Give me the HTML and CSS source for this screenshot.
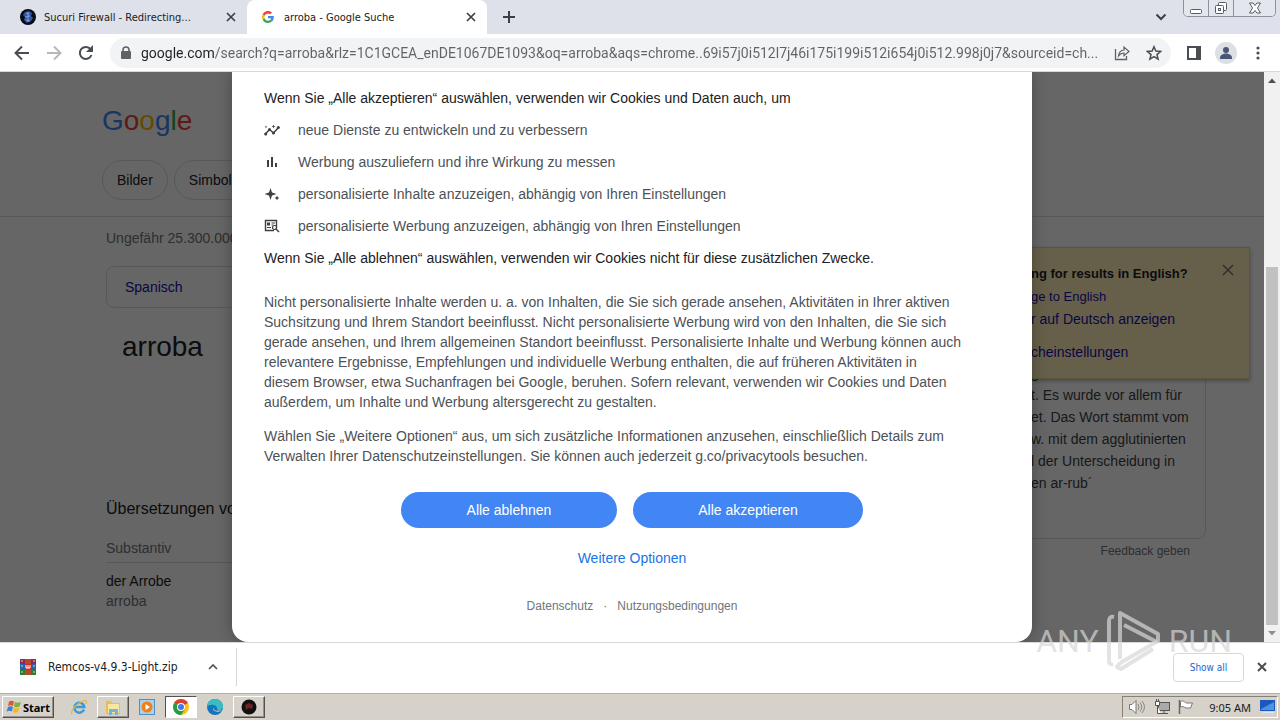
FILE: index.html
```
<!DOCTYPE html>
<html lang="de">
<head>
    <meta charset="UTF-8">
    <meta name="viewport" content="width=device-width, initial-scale=1.0">
    <title>arroba - Google Suche</title>
    <link rel="stylesheet" href="styles.css">
</head>
<body>
    <!-- Tab strip -->
    <div class="tabs">
        <div class="tab">
            <svg class="tab-icon" viewBox="0 0 16 16"><circle cx="8" cy="8" r="8" fill="#080b18"/><path d="M5 3l4-1 3 2-1 3 2 2-2 3-4 2-3-3 1-3-2-2z" fill="#3457a0"/><path d="M6 4l3 1M5 8l5-1M6 11l4 1M8 3v10" stroke="#7d9ee0" fill="none"/></svg>
            <span class="tab-title">Sucuri Firewall - Redirecting...</span>
            <button class="icon-btn" aria-label="Close tab"><svg width="10" height="10" viewBox="0 0 10 10"><path d="M1 1l8 8M9 1l-8 8" stroke="#3c4043" stroke-width="1.7"/></svg></button>
        </div>
        <div class="tab active">
            <svg class="tab-icon google-icon" viewBox="0 0 48 48"><path fill="#ea4335" d="M24 9.5c3.5 0 6.700 1.200 9.200 3.600l6.900-6.900C35.900 2.400 30.500 0 24 0 14.600 0 6.500 5.400 2.600 13.200l8 6.200C12.400 13.700 17.700 9.500 24 9.500z"/><path fill="#4285f4" d="M47 24.600c0-1.600-.2-3.100-.4-4.600H24v9h12.900c-.6 3-2.200 5.500-4.700 7.200l7.700 6C44.400 38 47 31.800 47 24.600z"/><path fill="#fbbc05" d="M10.500 28.600c-1-3-1-6.200 0-9.200l-8-6.200c-3.400 6.800-3.400 14.800 0 21.600z"/><path fill="#34a853" d="M24 48c6.500 0 11.900-2.100 15.900-5.800l-7.700-6c-2.200 1.500-4.900 2.300-8.200 2.300-6.300 0-11.600-4.200-13.500-9.900l-8 6.200C6.500 42.600 14.600 48 24 48z"/></svg>
            <span class="tab-title">arroba - Google Suche</span>
            <button class="icon-btn" aria-label="Close tab"><svg width="10" height="10" viewBox="0 0 10 10"><path d="M1 1l8 8M9 1l-8 8" stroke="#3c4043" stroke-width="1.7"/></svg></button>
        </div>
        <button class="icon-btn new-tab" aria-label="New tab"><svg width="12" height="12" viewBox="0 0 12 12"><path d="M6 0v12M0 6h12" stroke="#3c4043" stroke-width="2"/></svg></button>
        <button class="icon-btn tab-search" aria-label="Search tabs"><svg width="12" height="8" viewBox="0 0 12 8"><path d="M1.500 1.500L6 6l4.500-4.500" fill="none" stroke="#3c4043" stroke-width="2"/></svg></button>
        <div class="window-buttons">
            <button aria-label="Minimize"><svg width="14" height="14" viewBox="0 0 14 14"><rect x="1.500" y="8.500" width="11" height="4" rx="1" fill="#fff" stroke="#555b68"/></svg></button>
            <button aria-label="Restore"><svg width="14" height="14" viewBox="0 0 14 14"><rect x="4.500" y="1.500" width="8" height="8" rx="1" fill="#fff" stroke="#555b68"/><rect x="1.500" y="4.500" width="8" height="8" rx="1" fill="#fff" stroke="#555b68"/><rect x="4.500" y="7.500" width="2" height="2" fill="none" stroke="#555b68"/></svg></button>
            <button aria-label="Close"><svg width="14" height="12" viewBox="0 0 14 12"><path d="M1.500 1h3.500l2 2.500L9 1h3.500L9.500 6l3 5H9L7 8.500 5 11H1.500l3-5z" fill="#fff" stroke="#555b68"/></svg></button>
        </div>
    </div>

    <!-- Toolbar -->
    <div class="toolbar">
        <button class="icon-btn nav-btn" aria-label="Back"><svg width="16" height="16" viewBox="0 0 16 16"><path d="M15 8H2M8 1.500L1.500 8 8 14.500" fill="none" stroke="#4a4d51" stroke-width="1.900"/></svg></button>
        <button class="icon-btn nav-btn" aria-label="Forward"><svg width="16" height="16" viewBox="0 0 16 16"><path d="M1 8h13M8 1.500L14.500 8 8 14.500" fill="none" stroke="#b5b7ba" stroke-width="1.900"/></svg></button>
        <button class="icon-btn nav-btn" aria-label="Reload"><svg width="16" height="16" viewBox="0 0 16 16"><path d="M13.500 10A6 6 0 1 1 12.600 4.200" fill="none" stroke="#4a4d51" stroke-width="2"/><path d="M15 0v7H8z" fill="#4a4d51"/></svg></button>
        <div class="omnibox">
            <svg width="12" height="14" viewBox="0 0 12 14"><path d="M3 6V4a3 3 0 0 1 6 0v2" fill="none" stroke="#5f6368" stroke-width="1.600"/><rect x="1" y="5" width="10" height="8" rx="1" fill="#5f6368"/></svg>
            <input class="url" type="text" aria-label="Address" value="google.com/search?q=arroba&amp;rlz=1C1GCEA_enDE1067DE1093&amp;oq=arroba&amp;aqs=chrome..69i57j0i512l7j46i175i199i512i654j0i512.998j0j7&amp;sourceid=ch...">
            <button class="icon-btn nav-btn" aria-label="Share"><svg width="16" height="16" viewBox="0 0 16 16"><path d="M1.500 4v10.500h11V11" fill="none" stroke="#5f6368" stroke-width="1.300"/><path d="M4.500 11c.5-4 2.500-5.800 5.500-6V2l5 4.500-5 4.300V8C7.500 8 6 9 4.500 11z" fill="none" stroke="#5f6368" stroke-width="1.200"/></svg></button>
            <button class="icon-btn nav-btn" aria-label="Bookmark"><svg width="16" height="16" viewBox="0 0 16 16"><path d="M8 1.700l1.900 4.400 4.700.4-3.600 3.100 1.100 4.600L8 11.700l-4.100 2.500L5 9.600 1.400 6.500l4.700-.4z" fill="none" stroke="#4a4d51" stroke-width="1.500"/></svg></button>
        </div>
        <button class="icon-btn nav-btn" aria-label="Side panel"><svg width="14" height="14" viewBox="0 0 14 14"><path d="M0 0h14v14H0zM2 2v10h7V2z" fill="#4a4d51" fill-rule="evenodd"/></svg></button>
        <button class="icon-btn nav-btn" aria-label="Profile"><svg width="22" height="22" viewBox="0 0 22 22"><circle cx="11" cy="11" r="11" fill="#dcdfe4"/><circle cx="11" cy="8" r="3" fill="#4b5674"/><path d="M5 16c0-3 3-4.500 6-4.500s6 1.500 6 4.500v1H5z" fill="#4b5674"/></svg></button>
        <button class="icon-btn nav-btn" aria-label="Menu"><svg width="4" height="14" viewBox="0 0 4 14"><g fill="#4a4d51"><circle cx="2" cy="2" r="1.600"/><circle cx="2" cy="7" r="1.600"/><circle cx="2" cy="12" r="1.600"/></g></svg></button>
    </div>

    <!-- Page area -->
    <div class="viewport">
        <main class="page">
            <header class="header">
                <div class="logo"><span class="blue">G</span><span class="red">o</span><span class="yellow">o</span><span class="blue">g</span><span class="green">l</span><span class="red">e</span></div>
                <div class="chips">
                    <a class="chip" href="#">Bilder</a>
                    <a class="chip" href="#">Simbolo</a>
                </div>
            </header>
            <div class="results">
                <div class="left">
                    <div class="stats">Ungefähr 25.300.000</div>
                    <div class="lang"><a href="#">Spanisch</a></div>
                    <h2 class="word">arroba</h2>
                    <h3 class="translations">Übersetzungen von</h3>
                    <div class="kind">Substantiv</div>
                    <div class="entry">der Arrobe</div>
                    <div class="entry-sub">arroba</div>
                </div>
                <div class="right">
                    <div class="panel">
                        <div>g</div>
                        <div>t. Es wurde vor allem für</div>
                        <div>et. Das Wort stammt vom</div>
                        <div>w. mit dem agglutinierten</div>
                        <div>l der Unterscheidung in</div>
                        <div>en ar-rub´</div>
                    </div>
                    <a class="feedback" href="#">Feedback geben</a>
                </div>
            </div>
            <aside class="notice">
                <div class="notice-text">
                    <strong>ng for results in English?</strong>
                    <a class="small" href="#">ge to English</a>
                    <a href="#">r auf Deutsch anzeigen</a>
                    <a class="last" href="#">cheinstellungen</a>
                </div>
                <button class="icon-btn" aria-label="Dismiss"><svg width="12" height="12" viewBox="0 0 12 12"><path d="M1 1l10 10M11 1L1 11" stroke="#70757a" stroke-width="1.500"/></svg></button>
            </aside>
        </main>
        <div class="scrollbar">
            <svg width="8" height="5" viewBox="0 0 8 5"><path d="M0 5l4-4.500L8 5z" fill="#505050"/></svg>
            <div class="thumb"></div>
            <svg width="8" height="5" viewBox="0 0 8 5"><path d="M0 0l4 4.500L8 0z" fill="#909090"/></svg>
        </div>

        <!-- Consent dialog -->
        <div class="overlay">
            <div class="dialog" role="dialog">
                <p class="strong">Wenn Sie „Alle akzeptieren“ auswählen, verwenden wir Cookies und Daten auch, um</p>
                <ul>
                    <li><svg viewBox="0 0 16 16"><path d="M1 12.500l4.500-5 4 3.500L15 5" fill="none" stroke="#3c4043" stroke-width="1.500"/><g fill="#3c4043"><circle cx="1.700" cy="12" r="1.500"/><circle cx="5.500" cy="7.500" r="1.500"/><circle cx="9.500" cy="11" r="1.500"/><circle cx="14.300" cy="5.500" r="1.500"/><path d="M9.500 2.500l.6 1.400 1.400.6-1.400.6-.6 1.400-.6-1.400-1.400-.6 1.400-.6zM2 3.500l.4 1 .9.400-.9.400-.4 1-.4-1-.9-.4.900-.4z"/></g></svg>neue Dienste zu entwickeln und zu verbessern</li>
                    <li><svg viewBox="0 0 16 16"><path d="M3 6h2v7H3zM7 3h2v10H7zM11 9h2v4h-2z" fill="#3c4043"/></svg>Werbung auszuliefern und ihre Wirkung zu messen</li>
                    <li><svg viewBox="0 0 16 16"><path d="M6.500 2L8 6.500 12.500 8 8 9.500 6.500 14 5 9.500.5 8 5 6.500zM13 9.500l.8 1.700 1.700.8-1.700.8-.8 1.700-.8-1.700-1.700-.8 1.700-.8z" fill="#3c4043"/></svg>personalisierte Inhalte anzuzeigen, abhängig von Ihren Einstellungen</li>
                    <li><svg viewBox="0 0 16 16"><path d="M10 12.500H1.500v-10h11V10" fill="none" stroke="#3c4043" stroke-width="1.400"/><path d="M3 4.500h3v3H3zM7.500 4.500H11v1H7.500zM7.500 6.500h2v1h-2zM3 9h4v1H3z" fill="#3c4043"/><circle cx="10.500" cy="9.500" r="2" fill="#fff" stroke="#3c4043" stroke-width="1.200"/><path d="M12 11l3 3" stroke="#3c4043" stroke-width="1.400"/></svg>personalisierte Werbung anzuzeigen, abhängig von Ihren Einstellungen</li>
                </ul>
                <p class="strong">Wenn Sie „Alle ablehnen“ auswählen, verwenden wir Cookies nicht für diese zusätzlichen Zwecke.</p>
                <p class="body">Nicht personalisierte Inhalte werden u. a. von Inhalten, die Sie sich gerade ansehen, Aktivitäten in Ihrer aktiven<br>Suchsitzung und Ihrem Standort beeinflusst. Nicht personalisierte Werbung wird von den Inhalten, die Sie sich<br>gerade ansehen, und Ihrem allgemeinen Standort beeinflusst. Personalisierte Inhalte und Werbung können auch<br>relevantere Ergebnisse, Empfehlungen und individuelle Werbung enthalten, die auf früheren Aktivitäten in<br>diesem Browser, etwa Suchanfragen bei Google, beruhen. Sofern relevant, verwenden wir Cookies und Daten<br>außerdem, um Inhalte und Werbung altersgerecht zu gestalten.</p>
                <p class="body">Wählen Sie „Weitere Optionen“ aus, um sich zusätzliche Informationen anzusehen, einschließlich Details zum<br>Verwalten Ihrer Datenschutzeinstellungen. Sie können auch jederzeit g.co/privacytools besuchen.</p>
                <div class="actions">
                    <button class="reject">Alle ablehnen</button>
                    <button class="accept">Alle akzeptieren</button>
                </div>
                <a class="more" href="#">Weitere Optionen</a>
                <div class="legal"><a href="#">Datenschutz</a><span>·</span><a href="#">Nutzungsbedingungen</a></div>
            </div>
        </div>
    </div>

    <!-- Downloads bar -->
    <div class="downloads">
        <div class="download">
            <svg width="16" height="16" viewBox="0 0 16 16"><path d="M0 0h16v5H0z" fill="#8d2a5c"/><path d="M0 5h16v6H0z" fill="#2b5fb4"/><path d="M0 11h16v5H0z" fill="#2c7d36"/><path d="M5 0h6v16H5z" fill="#b5482b"/><path d="M5 5h6v6H5z" fill="#d42920"/><path d="M6 6v3h4V6M8 6v3" fill="none" stroke="#fff"/><path d="M1 2h2M13 2h2M1 7h2M13 7h2M1 13h2M13 13h2" stroke="#e8d36a"/></svg>
            <span class="file">Remcos-v4.9.3-Light.zip</span>
            <button class="icon-btn" aria-label="File menu"><svg width="10" height="6" viewBox="0 0 10 6"><path d="M1 5l4-4 4 4" fill="none" stroke="#4a4d51" stroke-width="1.600"/></svg></button>
        </div>
        <button class="show-all">Show all</button>
        <button class="icon-btn" aria-label="Close downloads"><svg width="10" height="10" viewBox="0 0 10 10"><path d="M1 1l8 8M9 1l-8 8" stroke="#4a4d51" stroke-width="2"/></svg></button>
    </div>

    <!-- Taskbar -->
    <div class="taskbar">
        <button class="task raised start"><svg width="16" height="16" viewBox="0 0 16 16"><path d="M3 2.500c2-1.300 3.500-1 5 0L7 7c-1.700-1-3.200-1-5 0z" fill="#e2572b"/><path d="M9 3c2 1 3.800 1 6 0l-1.500 4.500c-2 1-3.800.8-5.500 0z" fill="#7ab33c"/><path d="M2 8c1.700-1 3.200-1 5 0l-1.200 4.500c-1.500-1-3.300-1-5.300.2z" fill="#3f7fd0"/><path d="M8 8.500c1.700 1 3.500 1 5.400 0L12 13c-2 1-3.500.8-5.200 0z" fill="#f1b82d"/></svg>Start</button>
        <button class="task" aria-label="Internet Explorer"><svg width="18" height="18" viewBox="0 0 18 18"><path d="M14 11.500a5 5 0 1 1 .3-2.500H5" fill="none" stroke="#3c9bd9" stroke-width="2.500"/><path d="M2 16c-2-3 4-10 11-13 4-1.500 4 1 3 3" fill="none" stroke="#e6b93c" stroke-width="1.300"/></svg></button>
        <button class="task raised" aria-label="Explorer"><svg width="18" height="18" viewBox="0 0 18 18"><path d="M2 3h5l1 2h8v11H2z" fill="#e7bd55"/><path d="M4 6h11v9H4z" fill="#f9e7a0"/><path d="M5 17v-6h9v6h-3v-3H8v3z" fill="#6fb5dc"/></svg></button>
        <button class="task" aria-label="Media Player"><svg width="16" height="16" viewBox="0 0 16 16"><rect x=".5" y=".5" width="15" height="15" fill="#a9d0ec" stroke="#4f91c4"/><circle cx="8" cy="8" r="5.500" fill="#ee8119"/><path d="M6.500 5v6l4.500-3z" fill="#fff"/></svg></button>
        <button class="task pressed" aria-label="Chrome"><svg width="16" height="16" viewBox="0 0 16 16"><circle cx="8" cy="8" r="8" fill="#fbc116"/><path d="M8 8L1.100 4A8 8 0 0 1 14.900 4z" fill="#dd3f31"/><path d="M8 8L1.100 4A8 8 0 0 0 8 16l4-6z" fill="#289b4b"/><circle cx="8" cy="8" r="4" fill="#fff"/><circle cx="8" cy="8" r="3" fill="#3d7de3"/></svg></button>
        <button class="task" aria-label="Edge"><svg width="16" height="16" viewBox="0 0 16 16"><circle cx="8" cy="8" r="8" fill="#1673bd"/><path d="M0 8a8 8 0 0 1 16 0c0 3-5 4-6 2 1-4-7-6-10-2z" fill="#38bdc0"/><path d="M7 7c-2 4 2 6 8 4-3 3-8 2-9-1z" fill="#d6d2cb"/></svg></button>
        <button class="task raised" aria-label="Application"><svg width="16" height="16" viewBox="0 0 16 16"><circle cx="8" cy="8" r="7.500" fill="#111"/><path d="M4 6l4-2 4 2-1 4-3-1-3 2z" fill="#6e2322"/></svg></button>
        <div class="tray">
            <svg width="18" height="16" viewBox="0 0 18 16"><path d="M1.500 5.500H4l4-4v13l-4-4H1.500z" fill="#fff" stroke="#777"/><path d="M10 5q2 3 0 6M12 3.500q3.500 4.500 0 9M14 2q5 6 0 12" fill="none" stroke="#888"/></svg>
            <svg width="16" height="16" viewBox="0 0 16 16"><rect x="4.500" y="3.500" width="11" height="8" fill="#aaa" stroke="#555"/><path d="M6 14.500h8M10 12v2" stroke="#555"/><path d="M1.500 2.500h4v4h-4zM3.500 7v7.500H7M2.500 0v3M4.500 0v3" fill="#fff" stroke="#555"/></svg>
            <svg width="16" height="16" viewBox="0 0 16 16"><path d="M1.500 1v14" stroke="#666" stroke-width="1.500"/><path d="M2.500 2.500c3-1.500 4 .5 6 1.500h6l-2 5H8c-2-1-3-2-5.500-1z" fill="#fff" stroke="#777"/></svg>
            <span class="clock">9:05 AM</span>
            <svg width="16" height="14" viewBox="0 0 16 14"><rect width="15" height="11" fill="#1c59ba"/><path d="M1 9L14 2v8H1z" fill="#4d93e2"/><path d="M3 12.500h11" stroke="#dce7f5"/></svg>
        </div>
    </div>

    <!-- Watermark -->
    <div class="watermark">
        <span>ANY</span>
        <svg width="58" height="64" viewBox="0 0 58 64"><g fill="none" stroke="currentColor" stroke-width="4" stroke-linejoin="round"><path d="M9 8q-5-1-5 4v40q0 4 4 3M15 50V4l38 21v7L15 54"/><path d="M19 16l33 17M15 54l-3 4 4 2 32-20"/></g></svg>
        <span>RUN</span>
    </div>
</body>
</html>
```
FILE: styles.css
```
* {
    box-sizing: border-box;
}
body {
    margin: 0;
    height: 100vh;
    display: flex;
    flex-direction: column;
    overflow: hidden;
    background: #fff;
    font-family: "Liberation Sans", Arial, sans-serif;
    font-size: 14px;
    color: #202124;
}
button {
    font: inherit;
    cursor: pointer;
}
a {
    color: #1a0dab;
    text-decoration: none;
}
svg {
    display: block;
    flex: none;
}
.icon-btn {
    display: flex;
    align-items: center;
    justify-content: center;
    width: 16px;
    height: 16px;
    padding: 0;
    border: none;
    background: none;
    flex: none;
}

/* Tab strip */
.tabs {
    display: flex;
    align-items: stretch;
    flex: none;
    height: 34px;
    padding-left: 7px;
    background: #dee1e9;
    font-family: "DejaVu Sans Condensed", Tahoma, sans-serif;
    font-size: 11px;
}
.tab {
    display: flex;
    align-items: center;
    gap: 8px;
    width: 240px;
    padding: 0 8px 0 13px;
}
.tab.active {
    background: #fff;
    border-radius: 8px 8px 0 0;
}
.tab-icon {
    width: 16px;
    height: 16px;
}
.google-icon {
    padding: 2px;
}
.tab-title {
    flex: 1;
    white-space: nowrap;
}
.new-tab {
    margin: 9px 14px;
}
.tab-search {
    margin: 9px 14px 0 auto;
}
.window-buttons {
    display: flex;
    height: 17px;
    margin-right: 4px;
    border: 1px solid #8c919c;
    border-top: none;
    border-radius: 0 0 5px 5px;
    overflow: hidden;
}
.window-buttons button {
    display: flex;
    align-items: center;
    justify-content: center;
    width: 25px;
    padding: 0;
    border: none;
    border-right: 1px solid #8c919c;
    background: #e3e6ed;
}
.window-buttons button:last-child {
    width: 41px;
    border-right: none;
}

/* Toolbar */
.toolbar {
    display: flex;
    align-items: center;
    flex: none;
    height: 38px;
    padding: 0 6px;
    border-bottom: 1px solid #d5d7da;
}
.nav-btn {
    width: 32px;
    height: 32px;
}
.omnibox {
    flex: 1;
    display: flex;
    align-items: center;
    height: 30px;
    margin: 0 7px 0 8px;
    padding: 0 1px 0 10px;
    border-radius: 15px;
    background: #f1f3f4;
}
.url {
    flex: 1;
    min-width: 0;
    height: 30px;
    margin-left: 9px;
    padding: 0;
    border: none;
    outline: none;
    font-family: Roboto, Tahoma, sans-serif;
    font-size: 14px;
    color: transparent;
    background: linear-gradient(to right, #202124 73px, #5f6368 73px);
    -webkit-background-clip: text;
    background-clip: text;
}

/* Page */
.viewport {
    position: relative;
    display: flex;
    flex: 1;
    min-height: 0;
}
.page {
    position: relative;
    flex: 1;
    overflow: hidden;
}
.header {
    padding: 30px 102px 16px;
    border-bottom: 1px solid #dadce0;
}
.logo {
    height: 40px;
    margin-bottom: 18px;
    font-size: 28px;
    line-height: 38px;
}
.blue {
    color: #4285f4;
}
.red {
    color: #ea4335;
}
.yellow {
    color: #fbbc05;
}
.green {
    color: #34a853;
}
.chips {
    display: flex;
    gap: 6px;
}
.chip {
    padding: 0 14px;
    border: 1px solid #dadce0;
    border-radius: 20px;
    line-height: 38px;
    color: #202124;
}
.results {
    display: flex;
    justify-content: space-between;
    padding: 0 58px 0 106px;
}
.left {
    width: 652px;
}
.stats {
    line-height: 42px;
    color: #70757a;
}
.lang {
    margin-top: 7px;
    padding: 0 18px;
    border: 1px solid #dadce0;
    border-radius: 8px;
    line-height: 40px;
}
.word {
    margin: 20px 16px 132px;
    font-size: 28px;
    font-weight: normal;
    line-height: 38px;
}
.translations {
    margin: 0 0 18px;
    font-size: 16px;
    font-weight: normal;
    line-height: 22px;
}
.kind {
    padding-bottom: 4px;
    border-bottom: 1px solid #dadce0;
    line-height: 20px;
    color: #70757a;
}
.entry {
    margin-top: 8px;
    line-height: 20px;
}
.entry-sub {
    line-height: 20px;
    color: #70757a;
}
.right {
    display: flex;
    flex-direction: column;
    align-items: flex-end;
}
.panel {
    width: 368px;
    margin-top: 50px;
    padding: 94px 0 44px 192px;
    border: 1px solid #dadce0;
    border-radius: 8px;
    line-height: 22px;
    color: #3c4043;
    white-space: nowrap;
}
.feedback {
    margin: 5px 16px;
    font-size: 12px;
    color: #70757a;
}
.notice {
    position: absolute;
    top: 175px;
    right: 14px;
    display: flex;
    justify-content: space-between;
    width: 520px;
    height: 132px;
    padding: 14px 13px 14px 300px;
    border: 1px solid #e9d48a;
    background: #fff0b8;
    box-shadow: 0 2px 4px rgba(0, 0, 0, 0.3);
}
.notice-text {
    display: flex;
    flex-direction: column;
    line-height: 23px;
    white-space: nowrap;
}
.notice strong,
.notice .small {
    font-size: 13px;
}
.notice .last {
    margin-top: 10px;
}
.scrollbar {
    display: flex;
    flex-direction: column;
    align-items: center;
    gap: 6px;
    width: 16px;
    padding: 6px 0;
    background: #f1f1f1;
}
.thumb {
    width: 12px;
    height: 358px;
    margin-top: auto;
    background: #c1c1c1;
}

/* Consent dialog */
.overlay {
    position: absolute;
    inset: 0 16px 0 0;
    display: flex;
    justify-content: center;
    align-items: flex-end;
    background: rgba(0, 0, 0, 0.6);
    overflow: hidden;
}
.dialog {
    display: flex;
    flex-direction: column;
    width: 800px;
    max-width: 100%;
    padding: 16px 32px 26px;
    border-radius: 0 0 16px 16px;
    background: #fff;
    box-shadow: 0 0 16px rgba(0, 0, 0, 0.3);
    line-height: 20px;
    white-space: nowrap;
}
.dialog p {
    margin: 0;
}
.dialog ul {
    display: flex;
    flex-direction: column;
    gap: 12px;
    margin: 12px 0;
    padding: 0;
    list-style: none;
    color: #4d5156;
}
.dialog li {
    display: flex;
    align-items: center;
    gap: 18px;
}
.dialog li svg {
    width: 16px;
    height: 16px;
}
.dialog .body {
    margin-top: 14px;
    color: #4d5156;
}
.dialog .strong + .body {
    margin-top: 24px;
}
.actions {
    display: flex;
    justify-content: center;
    gap: 16px;
    margin: 26px 0 20px;
}
.actions button {
    height: 36px;
    padding: 0;
    border: none;
    border-radius: 18px;
    background: #4285f4;
    color: #fff;
}
.reject {
    width: 216px;
}
.accept {
    width: 230px;
}
.more {
    align-self: center;
    color: #1a73e8;
}
.legal {
    display: flex;
    justify-content: center;
    gap: 10px;
    margin-top: 28px;
    font-size: 12px;
    color: #70757a;
}
.legal a {
    color: #70757a;
}

/* Downloads bar */
.downloads {
    display: flex;
    align-items: center;
    flex: none;
    height: 51px;
    padding: 0 10px 2px 0;
    border-top: 1px solid #d5d7da;
    font-family: "DejaVu Sans Condensed", Tahoma, sans-serif;
}
.download {
    display: flex;
    align-items: center;
    gap: 12px;
    width: 237px;
    height: 38px;
    padding: 0 15px 0 20px;
    border-right: 1px solid #d5d7da;
}
.file {
    flex: 1;
    font-size: 12px;
    white-space: nowrap;
}
.show-all {
    width: 71px;
    height: 29px;
    margin: 0 10px 0 auto;
    padding: 0;
    border: 1px solid #d5d7da;
    border-radius: 4px;
    background: #fff;
    font-size: 10px;
    color: #1a66d2;
}

/* Taskbar */
.taskbar {
    display: flex;
    align-items: center;
    gap: 2px;
    flex: none;
    height: 27px;
    padding: 2px;
    border-top: 1px solid #b5b1a9;
    background: #d6d1c9;
    font-family: "Noto Sans", Tahoma, sans-serif;
    font-size: 11px;
}
.task {
    display: flex;
    align-items: center;
    justify-content: center;
    width: 32px;
    height: 22px;
    padding: 0;
    border: 1px solid transparent;
    background: none;
}
.raised {
    border-color: #fff #55524e #55524e #fff;
    box-shadow: inset -1px -1px #97938c;
}
.pressed {
    border-color: #55524e #fff #fff #55524e;
    background: #fff;
}
.start {
    gap: 1px;
    width: 52px;
    margin-right: 7px;
    font-weight: bold;
}
.tray {
    display: flex;
    align-items: center;
    gap: 8px;
    height: 22px;
    margin-left: auto;
    padding: 0 1px 0 5px;
    border: 1px solid;
    border-color: #85817a #fff #fff #85817a;
}
.clock {
    margin: 0 1px 0 7px;
}

/* Watermark */
.watermark {
    position: absolute;
    right: 48px;
    bottom: 47px;
    display: flex;
    align-items: center;
    gap: 6px;
    font-family: Roboto, sans-serif;
    font-size: 32px;
    line-height: 34px;
    color: rgba(215, 215, 215, 0.7);
    pointer-events: none;
}
```
